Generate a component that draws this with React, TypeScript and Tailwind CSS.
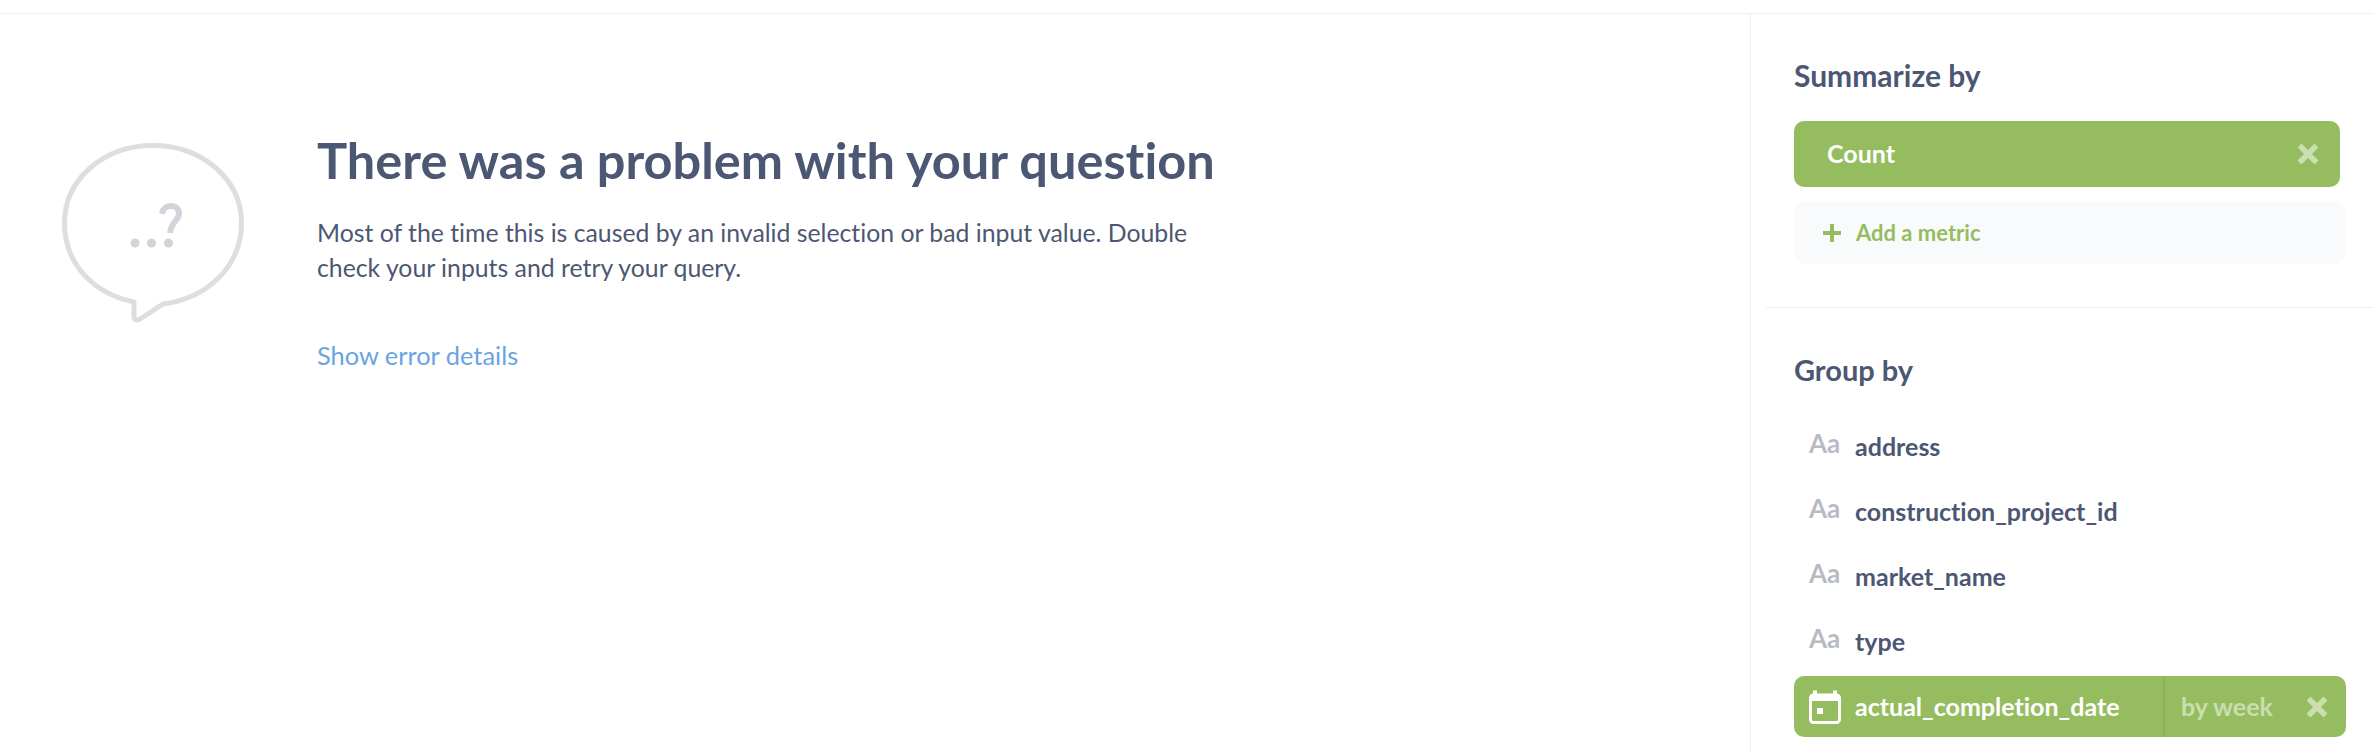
import React from "react";

function Close({ className }: { className: string }) {
  return (
    <svg viewBox="0 0 22 22" className={className} aria-hidden="true">
      <path d="M2.5 2.5 L19.5 19.5 M19.5 2.5 L2.5 19.5" stroke="#ffffff" strokeOpacity="0.5" strokeWidth="5.5" fill="none" />
    </svg>
  );
}

function Bubble() {
  return (
    <svg viewBox="0 0 182 181" className="w-[182px] h-[181px] shrink-0" aria-hidden="true">
      <path
        d="M72 159 C30 150 2.5 120 2.5 80 C2.5 36 42 2.5 91 2.5 C140 2.5 179.5 36 179.5 80 C179.5 122 147 155 101 161 L78 176 Q72 179 72 173 Z"
        fill="none"
        stroke="#dedede"
        strokeWidth="5"
        strokeLinejoin="round"
      />
      <circle cx="73" cy="100" r="4.5" fill="#d2d4da" />
      <circle cx="89.5" cy="100" r="4.5" fill="#d2d4da" />
      <circle cx="106.5" cy="100" r="4.5" fill="#d2d4da" />
      <path d="M100 71 C101 65 105 63 109 63 C114 63 117 66 117 71 C117 77 109 79 108 90" fill="none" stroke="#d2d4da" strokeWidth="6" />
    </svg>
  );
}

function Calendar() {
  return (
    <svg viewBox="0 0 32 34" className="w-[32px] h-[34px] shrink-0" aria-hidden="true">
      <rect x="1.5" y="5" width="29" height="27.5" rx="3" fill="none" stroke="#ffffff" strokeWidth="3" />
      <rect x="1.5" y="5" width="29" height="6" fill="#ffffff" />
      <rect x="4" y="0.5" width="4" height="6" fill="#ffffff" />
      <rect x="24" y="0.5" width="4" height="6" fill="#ffffff" />
      <rect x="8" y="18" width="6" height="6" fill="#ffffff" />
    </svg>
  );
}

function FieldRow({ name }: { name: string }) {
  return (
    <div className="flex items-center h-[65px] pl-[15px]">
      <span className="w-[46px] shrink-0 text-[26px] font-bold text-[#b8bbc3] -mt-[6px]">Aa</span>
      <span className="text-[25px] font-bold text-[#4c5773]">{name}</span>
    </div>
  );
}

export default function App() {
  return (
    <div className="w-[2374px] h-[752px] overflow-hidden bg-white flex flex-col font-['Lato',sans-serif] [font-variant-ligatures:none]">
      <div className="h-[14px] shrink-0 border-b border-[#eeeff0]" />
      <div className="flex flex-1 min-h-0">
        <main className="flex-1 flex items-start pl-[62px] pt-[129px]">
          <Bubble />
          <div className="ml-[73px] w-[920px] -mt-[12px]">
            <h1 className="text-[50.5px] leading-[58px] font-bold text-[#4c5773]">There was a problem with your question</h1>
            <p className="mt-[26px] text-[24.8px] leading-[35px] text-[#4c5773]">
              Most of the time this is caused by an invalid selection or bad input value. Double
              <br />
              check your inputs and retry your query.
            </p>
            <a className="block mt-[53px] text-[25.4px] leading-[35px] text-[#6ba3e3]">Show error details</a>
          </div>
        </main>
        <aside className="w-[624px] shrink-0 border-l border-[#eeeff0] pt-[45px]">
          <div className="pl-[43px] pr-[28px]">
            <h2 className="text-[30px] leading-[32px] font-bold text-[#4c5773]">Summarize by</h2>
            <div className="mt-[30px] mr-[6px] h-[66px] rounded-[10px] bg-[#95bd60] flex items-center justify-between pl-[33px] pr-[21px]">
              <span className="text-[25px] font-bold text-white">Count</span>
              <Close className="w-[22px] h-[22px]" />
            </div>
            <div className="mt-[14px] h-[63px] rounded-[12px] bg-[#f9fafc] flex items-center pl-[29px] gap-[15px]">
              <svg viewBox="0 0 18 18" className="w-[18px] h-[18px]" aria-hidden="true">
                <path d="M9 0 V18 M0 9 H18" stroke="#95bd60" strokeWidth="4" fill="none" />
              </svg>
              <span className="text-[22px] font-bold text-[#95bd60]">Add a metric</span>
            </div>
          </div>
          <div className="mt-[43px] ml-[15px] border-t border-[#eeeff0] pl-[28px] pr-[28px] pt-[46px]">
            <h2 className="text-[29px] leading-[32px] font-bold text-[#4c5773]">Group by</h2>
            <div className="mt-[28px]">
              <FieldRow name="address" />
              <FieldRow name="construction_project_id" />
              <FieldRow name="market_name" />
              <div className="flex items-center h-[65px] pl-[15px]">
                <span className="w-[46px] shrink-0 text-[26px] font-bold text-[#b8bbc3] -mt-[6px]">Aa</span>
                <span className="text-[25px] font-bold text-[#4c5773]">type</span>
              </div>
            </div>
            <div className="mt-[2px] h-[61px] rounded-[10px] bg-[#95bd60] flex items-stretch">
              <div className="flex items-center gap-[14px] pl-[15px] w-[371px] border-r-2 border-[#8cb25a]">
                <Calendar />
                <span className="text-[25px] font-bold text-white">actual_completion_date</span>
              </div>
              <div className="flex-1 flex items-center justify-between pl-[16px] pr-[18px]">
                <span className="text-[25px] font-bold text-white/50">by week</span>
                <Close className="w-[22px] h-[22px]" />
              </div>
            </div>
          </div>
        </aside>
      </div>
    </div>
  );
}
